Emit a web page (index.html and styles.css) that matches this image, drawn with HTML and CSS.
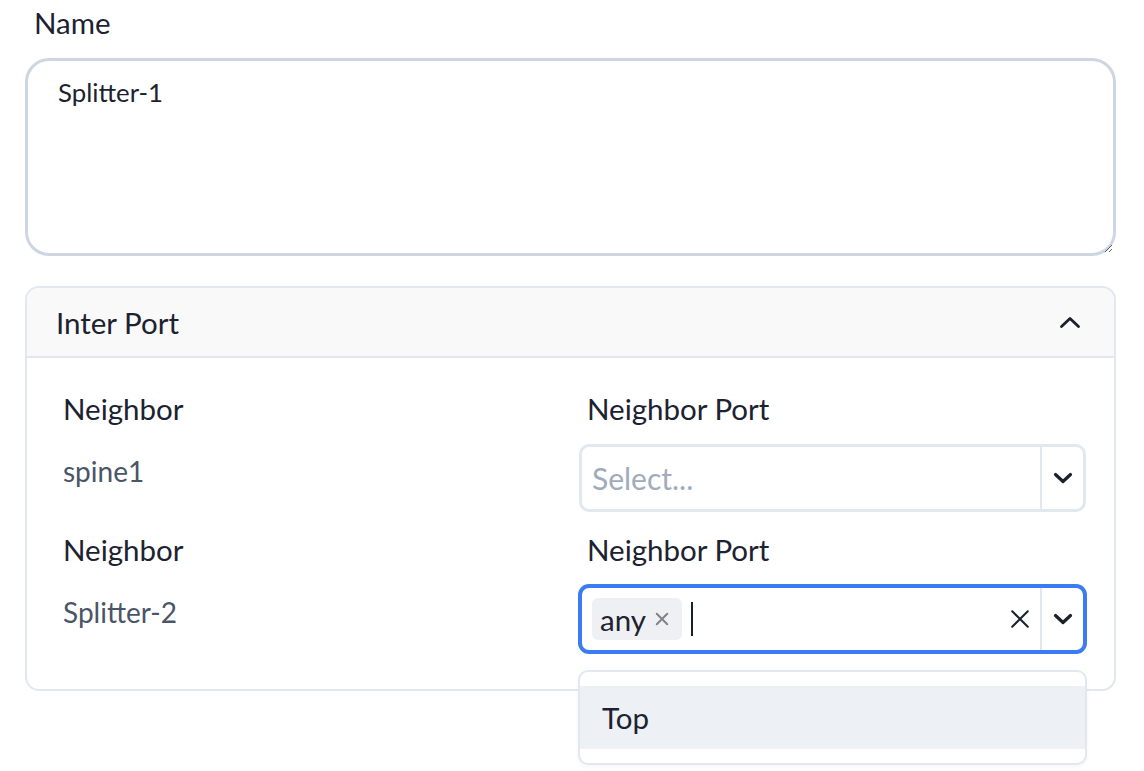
FILE: index.html
```html
<!DOCTYPE html>
<html lang="en">
<head>
  <meta charset="UTF-8" />
  <meta name="viewport" content="width=device-width, initial-scale=1.0"/>
  <title>Splitter Properties</title>
  <link rel="stylesheet" href="styles.css">
</head>
<body>
  <div class="form">
    <label class="field-label" for="nodeName">Name</label>
    <textarea id="nodeName" class="name-input">Splitter-1</textarea>

    <section class="panel">
      <header class="panel-head">
        <span class="panel-title">Inter Port</span>
        <svg class="chevron-up" width="24" height="24" viewBox="0 0 24 24">
          <path d="M3.5 16.5l8.5-8 8.5 8" fill="none" stroke="currentColor" stroke-width="2.8" stroke-linecap="round" stroke-linejoin="round"/>
        </svg>
      </header>

      <div class="panel-body">
        <div class="port-row">
          <div class="cell">
            <div class="cell-label">Neighbor</div>
            <div class="cell-value">spine1</div>
          </div>
          <div class="cell">
            <div class="cell-label">Neighbor Port</div>
            <div class="select">
              <div class="select-value">
                <span class="placeholder">Select...</span>
              </div>
              <div class="select-indicators">
                <span class="divider"></span>
                <span class="indicator">
                  <svg width="24" height="24" viewBox="0 0 24 24">
                    <path d="M4.5 8.5l7.5 7 7.5-7" fill="none" stroke="currentColor" stroke-width="3.2" stroke-linecap="round" stroke-linejoin="round"/>
                  </svg>
                </span>
              </div>
            </div>
          </div>
        </div>

        <div class="port-row">
          <div class="cell">
            <div class="cell-label">Neighbor</div>
            <div class="cell-value">Splitter-2</div>
          </div>
          <div class="cell">
            <div class="cell-label">Neighbor Port</div>
            <div class="select-wrap">
              <div class="select is-focused">
                <div class="select-value">
                  <span class="tag">any
                    <svg class="tag-remove" width="18" height="18" viewBox="0 0 24 24">
                      <path d="M5 5l14 14M19 5L5 19" fill="none" stroke="currentColor" stroke-width="2.6" stroke-linecap="round"/>
                    </svg>
                  </span>
                  <span class="caret"></span>
                </div>
                <div class="select-indicators">
                  <span class="indicator clear">
                    <svg width="22" height="22" viewBox="0 0 24 24">
                      <path d="M3.5 3.5l17 17M20.5 3.5l-17 17" fill="none" stroke="currentColor" stroke-width="2.2" stroke-linecap="round"/>
                    </svg>
                  </span>
                  <span class="divider"></span>
                  <span class="indicator">
                    <svg width="24" height="24" viewBox="0 0 24 24">
                      <path d="M4.5 8.5l7.5 7 7.5-7" fill="none" stroke="currentColor" stroke-width="3.2" stroke-linecap="round" stroke-linejoin="round"/>
                    </svg>
                  </span>
                </div>
              </div>
              <ul class="menu">
                <li class="menu-option is-active">Top</li>
              </ul>
            </div>
          </div>
        </div>
      </div>
    </section>
  </div>
</body>
</html>
```

FILE: styles.css
```css
:root {
  --text: #1c2230;
  --muted: #4a5568;
  --line: #e2e8f0;
  --focus: #3b7cf2;
}

body {
  margin: 0;
  background: #fff;
  color: var(--text);
  font-family: "Lato", "Noto Sans", sans-serif;
}

/* leave room under the panel for the open dropdown */
.form {
  padding: 5px 28px 100px 25px;
}

.field-label {
  display: block;
  padding-left: 9px;
  font-size: 29.5px;
  line-height: 36px;
  margin-bottom: 17px;
}

.name-input {
  display: block;
  box-sizing: border-box;
  width: 100%;
  height: 198px;
  margin: 0;
  padding: 16px 30px;
  border: 3px solid #cdd6e1;
  border-radius: 24px;
  font-family: inherit;
  font-size: 25.8px;
  line-height: 30px;
  color: var(--text);
  resize: vertical;
  outline: none;
}

/* collapsible panel */

.panel {
  margin-top: 30px;
  border: 2px solid var(--line);
  border-radius: 14px;
}

.panel-head {
  display: flex;
  align-items: center;
  justify-content: space-between;
  height: 68px;
  padding: 0 32px 0 29px;
  background: #f9f9fa;
  border-bottom: 2px solid var(--line);
  border-radius: 12px 12px 0 0;
}

.panel-title {
  font-size: 29.5px;
}

.chevron-up {
  color: #1a202c;
}

.panel-body {
  padding: 33px 28px 36px 28px;
  display: flex;
  flex-direction: column;
  gap: 20px;
}

.port-row {
  display: grid;
  grid-template-columns: 1fr 1fr;
  gap: 17px;
}

.cell-label {
  padding-left: 8px;
  font-size: 29.5px;
  line-height: 36px;
  margin-bottom: 17px;
}

.cell-value {
  padding: 9px 0 0 8px;
  font-size: 28px;
  line-height: 36px;
  color: var(--muted);
}

/* select control */

.select-wrap {
  position: relative;
}

.select {
  box-sizing: border-box;
  display: flex;
  align-items: stretch;
  height: 68px;
  border: 3px solid var(--line);
  border-radius: 10px;
  background: #fff;
}

.select.is-focused {
  border-color: var(--focus);
  box-shadow: 0 0 0 1px var(--focus);
}

.select-value {
  flex: 1;
  display: flex;
  align-items: center;
  gap: 9px;
  padding: 0 10px;
  min-width: 0;
}

.placeholder {
  font-size: 30px;
  color: #a0abbb;
}

.tag {
  display: inline-flex;
  align-items: center;
  gap: 7px;
  height: 42px;
  padding: 0 11px 0 8px;
  border-radius: 6px;
  background: #eef0f4;
  font-size: 29.5px;
  color: var(--text);
}

.tag-remove {
  color: #7d828b;
}

.caret {
  width: 2px;
  height: 34px;
  background: #1a202c;
}

.select-indicators {
  display: flex;
  align-items: center;
}

.divider {
  align-self: stretch;
  width: 2px;
  background: var(--line);
}

.indicator {
  display: flex;
  align-items: center;
  justify-content: center;
  width: 41px;
  color: #1a202c;
}

.indicator.clear {
  width: 40px;
}

/* open dropdown */

.menu {
  position: absolute;
  top: calc(100% + 17px);
  left: -1px;
  right: -1px;
  margin: 0;
  padding: 14px 0;
  list-style: none;
  background: #fff;
  border: 2px solid var(--line);
  border-radius: 10px;
  box-shadow: 0 2px 4px rgba(0, 0, 0, 0.04);
  z-index: 10;
}

.menu-option {
  height: 63px;
  padding: 0 22px;
  display: flex;
  align-items: center;
  font-size: 29.5px;
}

.menu-option.is-active {
  background: #edf0f5;
}
```
